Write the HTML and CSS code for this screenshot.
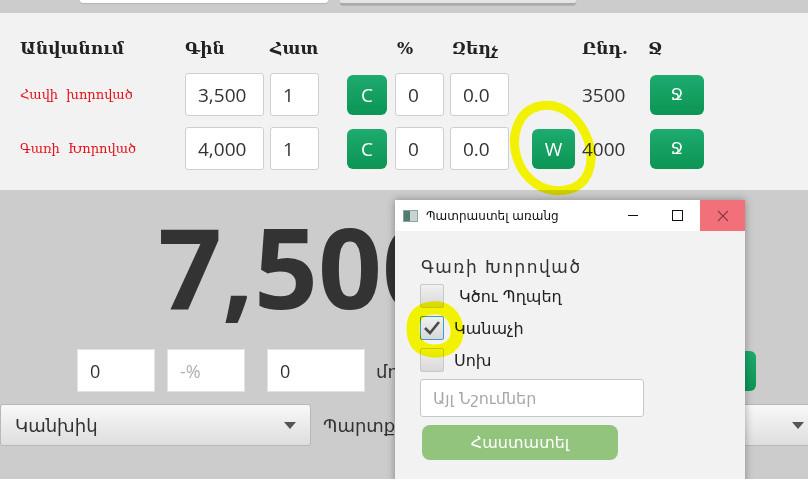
FILE: index.html
```html
<!DOCTYPE html>
<html lang="hy">
<head>
    <meta charset="UTF-8">
    <meta name="viewport" content="width=device-width, initial-scale=1.0">
    <title>Պատվեր</title>
    <link rel="stylesheet" href="styles.css">
</head>
<body>
    <div class="topbar">
        <div class="topfield"></div>
        <div class="topfield alt"></div>
    </div>

    <section class="orders">
        <div class="row head">
            <div class="c-name">Անվանում</div>
            <div class="c-price">Գին</div>
            <div class="c-qty">Հատ</div>
            <div class="c-btn"></div>
            <div class="c-pct">%</div>
            <div class="c-disc">Զեղչ</div>
            <div class="c-w"></div>
            <div class="c-total">Ընդ.</div>
            <div class="c-del">Ջ</div>
        </div>
        <div class="row">
            <div class="c-name dish">Հավի խորոված</div>
            <input class="c-price field" value="3,500">
            <input class="c-qty field" value="1">
            <button class="c-btn green">C</button>
            <input class="c-pct field" value="0">
            <input class="c-disc field" value="0.0">
            <div class="c-w"></div>
            <div class="c-total">3500</div>
            <button class="c-del green">Ջ</button>
        </div>
        <div class="row">
            <div class="c-name dish">Գառի Խորոված</div>
            <input class="c-price field" value="4,000">
            <input class="c-qty field" value="1">
            <button class="c-btn green">C</button>
            <input class="c-pct field" value="0">
            <input class="c-disc field" value="0.0">
            <div class="c-w"><button class="green wbtn">W</button></div>
            <div class="c-total">4000</div>
            <button class="c-del green">Ջ</button>
        </div>
    </section>

    <section class="summary">
        <div class="total">7,500</div>
        <div class="discounts">
            <input class="box" value="0">
            <input class="box" placeholder="-%">
            <input class="box wide" value="0">
            <span class="paid">մուծված</span>
            <button class="green pay">✓</button>
        </div>
        <div class="payrow">
            <div class="select first">Կանխիկ<span class="arrow"></span></div>
            <span class="debt">Պարտք</span>
            <div class="select second"><span class="arrow"></span></div>
        </div>
    </section>

    <div class="dialog">
        <div class="titlebar">
            <span class="appicon"><i></i></span>
            <span class="title">Պատրաստել առանց</span>
            <span class="ctl min"></span>
            <span class="ctl max"><i></i></span>
            <span class="ctl close">
                <svg width="12" height="12" viewBox="0 0 12 12"><path d="M1 1 L11 11 M11 1 L1 11" stroke="#8a3a40" stroke-width="1.1"/></svg>
            </span>
        </div>
        <div class="dbody">
            <div class="dname">Գառի Խորոված</div>
            <label class="check"><span class="tick"></span><span class="lbl first">Կծու Պղպեղ</span></label>
            <label class="check"><span class="tick on">
                <svg width="18" height="16" viewBox="0 0 18 16"><path d="M2 8 L7 13 L16 2" fill="none" stroke="#4a4a4a" stroke-width="2.6"/></svg>
            </span><span class="lbl">Կանաչի</span></label>
            <label class="check"><span class="tick"></span><span class="lbl">Սոխ</span></label>
            <input class="note" placeholder="Այլ Նշումներ">
            <button class="confirm">Հաստատել</button>
        </div>
    </div>

    <svg class="marks" width="808" height="479" viewBox="0 0 808 479">
        <path d="M540 106 C562 102 580 118 588 140 C596 164 588 186 566 190 C544 194 524 180 517 158 C510 136 518 110 540 106 Z" fill="none" stroke="#ffff00" stroke-width="9"/>
        <path d="M432 308 C446 306 456 316 457 330 C458 344 447 352 433 351 C419 350 413 342 413 328 C413 316 420 309 432 308 Z" fill="none" stroke="#ffff00" stroke-width="13"/>
    </svg>
</body>
</html>
```

FILE: styles.css
```css
* {
    box-sizing: border-box;
}
body {
    margin: 0;
    height: 479px;
    overflow: hidden;
    position: relative;
    background-color: #cccccc;
    font-family: "Open Sans", "DejaVu Sans", sans-serif;
    color: #333;
}
input, button {
    font-family: inherit;
    outline: none;
}
.topbar {
    height: 13px;
    display: flex;
    gap: 12px;
    padding-left: 80px;
}
.topfield {
    width: 248px;
    height: 3px;
    background-color: #fff;
    border-radius: 0 0 3px 3px;
    box-shadow: 0 1px 1px rgba(0, 0, 0, .12);
}
.topfield.alt {
    width: 236px;
    height: 5px;
    background-color: #e4e4e4;
    border-bottom: 2px solid #a9a9a9;
}

/* order table */
.orders {
    background-color: #f2f2f2;
    height: 177px;
    padding: 20px 0 0 20px;
}
.row {
    display: flex;
    align-items: center;
    height: 43px;
    margin-bottom: 11px;
}
.row.head {
    height: 30px;
    margin-bottom: 10px;
    font-family: "DejaVu Serif", serif;
    font-weight: bold;
    font-size: 17px;
    color: #222;
}
.c-name { width: 165px; flex: none; }
.c-price { width: 79px; margin-right: 6px; flex: none; }
.c-qty { width: 49px; margin-right: 28px; flex: none; }
.c-btn { width: 40px; margin-right: 8px; flex: none; }
.c-pct { width: 49px; margin-right: 6px; flex: none; }
.c-disc { width: 59px; flex: none; }
.c-w { width: 73px; padding-left: 23px; flex: none; }
.c-total { width: 68px; flex: none; font-size: 19px; }
.c-del { width: 54px; flex: none; }
.head .c-pct { padding-left: 2px; }
.head .c-disc { padding-left: 2px; }
.head .c-total, .head .c-del { font-size: 17px; }
.head .c-del { margin-left: -2px; }
.dish {
    font-family: "DejaVu Serif", serif;
    font-size: 13px;
    color: #e5101a;
    word-spacing: 4px;
}
.field {
    height: 43px;
    border: 1px solid #cfcfcf;
    border-radius: 3px;
    background-color: #fff;
    padding: 0 0 0 12px;
    font-size: 19px;
    color: #333;
}
.green {
    height: 40px;
    border: none;
    border-radius: 6px;
    background: linear-gradient(#1eab6f, #0c9554);
    color: #fff;
    font-size: 19px;
    padding: 0;
}
.wbtn {
    width: 43px;
}
.c-del.green {
    font-family: "DejaVu Sans", sans-serif;
    font-size: 16px;
}

/* totals */
.summary {
    padding-top: 20px;
}
.total {
    font-family: "Open Sans", sans-serif;
    font-weight: 700;
    font-size: 112px;
    line-height: 112px;
    padding-left: 158px;
    color: #333;
}
.discounts {
    display: flex;
    align-items: center;
    height: 43px;
    margin-top: 27px;
    padding-left: 77px;
}
.box {
    width: 78px;
    height: 43px;
    border: 1px solid #e2e2e2;
    background-color: #fff;
    padding: 0 0 0 12px;
    font-size: 18px;
    color: #333;
    margin-right: 12px;
}
.box::placeholder {
    color: #b0b0b0;
}
.box:nth-child(2) {
    margin-right: 22px;
}
.box.wide {
    width: 98px;
}
.paid {
    font-size: 18px;
    margin-left: -1px;
}
.pay {
    margin-left: auto;
    margin-right: 52px;
    width: 56px;
}
.payrow {
    display: flex;
    align-items: center;
    width: 819px;
    height: 42px;
    margin-top: 12px;
}
.select {
    position: relative;
    height: 42px;
    display: flex;
    align-items: center;
    padding-left: 14px;
    font-size: 18px;
    color: #333;
    border: 1px solid #b8b8b8;
    border-radius: 3px;
    background: linear-gradient(#f8f8f8, #dedede);
}
.select.first {
    width: 311px;
}
.select.second {
    width: 300px;
    margin-left: auto;
}
.arrow {
    margin-left: auto;
    margin-right: 14px;
    width: 0;
    height: 0;
    border-left: 6px solid transparent;
    border-right: 6px solid transparent;
    border-top: 7px solid #555;
}
.debt {
    margin-left: 12px;
    font-size: 18px;
}

/* dialog window */
.dialog {
    position: absolute;
    left: 395px;
    top: 200px;
    width: 350px;
    height: 300px;
    background-color: #f2f2f2;
    box-shadow: 0 0 8px rgba(0, 0, 0, .35);
    font-family: "DejaVu Sans", sans-serif;
}
.titlebar {
    height: 31px;
    background-color: #fff;
    display: flex;
    align-items: center;
    padding-left: 8px;
}
.appicon {
    width: 15px;
    height: 12px;
    background-color: #c9d3d0;
    border: 1px solid #8fa39e;
    display: flex;
}
.appicon i {
    width: 6px;
    background-color: #4f7d72;
}
.title {
    margin-left: 8px;
    font-size: 12px;
    color: #111;
}
.ctl {
    width: 45px;
    height: 31px;
    display: flex;
    align-items: center;
    justify-content: center;
    flex: none;
}
.min {
    margin-left: auto;
}
.min::after {
    content: "";
    width: 10px;
    border-top: 1px solid #111;
}
.max i {
    width: 11px;
    height: 11px;
    border: 1px solid #111;
}
.close {
    background-color: #f1707a;
}
.dbody {
    padding: 25px 0 0 25px;
}
.dname {
    font-size: 17px;
    letter-spacing: 1.5px;
    color: #333;
    margin-left: 1px;
    height: 22px;
    line-height: 22px;
}
.check {
    display: flex;
    align-items: center;
    height: 24px;
    margin-top: 8px;
    font-size: 16px;
    color: #222;
}
.check:first-of-type {
    margin-top: 6px;
}
.tick {
    width: 24px;
    height: 24px;
    border: 1px solid #c8c8c8;
    border-radius: 2px;
    background: linear-gradient(#f0f0f0, #d8d8d8);
    display: flex;
    align-items: center;
    justify-content: center;
}
.tick.on {
    border-color: #3a9fd0;
}
.lbl {
    margin-left: 10px;
}
.lbl.first {
    margin-left: 15px;
}
.note {
    display: block;
    width: 224px;
    height: 38px;
    margin-top: 7px;
    border: 1px solid #c8c8c8;
    border-radius: 3px;
    background-color: #fff;
    padding-left: 12px;
    font-family: "DejaVu Sans", sans-serif;
    font-size: 16px;
}
.note::placeholder {
    color: #a8a8a8;
}
.confirm {
    display: block;
    width: 196px;
    height: 35px;
    margin: 8px 0 0 2px;
    border: none;
    border-radius: 8px;
    background-color: #93c47d;
    color: #fff;
    font-family: "DejaVu Sans", sans-serif;
    font-size: 16px;
}

/* marker scribbles over the screenshot */
.marks {
    position: absolute;
    left: 0;
    top: 0;
    pointer-events: none;
    mix-blend-mode: multiply;
}
```
